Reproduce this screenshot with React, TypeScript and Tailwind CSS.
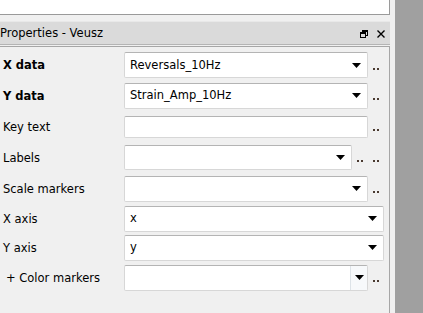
import React from "react";

const font = { fontFamily: '"DejaVu Sans", Verdana, sans-serif' };

function Arrow() {
  return (
    <svg width="9" height="5" viewBox="0 0 9 5" className="block">
      <path d="M0 0 H9 L4.5 5 Z" fill="#000" />
    </svg>
  );
}

function Dots() {
  return (
    <div className="w-[16px] h-full flex items-center">
      <div className="flex gap-[2px] ml-[5px] mt-[7px]">
        <div className="w-[2px] h-[2px] bg-[#4a3a30]" />
        <div className="w-[2px] h-[2px] bg-[#4a3a30]" />
      </div>
    </div>
  );
}

type Row = {
  label: string;
  bold?: boolean;
  h: number;
  kind: "combo" | "edit" | "combobtn";
  value?: string;
  width: number;
  fh: number;
  dots: number;
};

const rows: Row[] = [
  { label: "X data", bold: true, h: 30, kind: "combo", value: "Reversals_10Hz", width: 244, fh: 26, dots: 1 },
  { label: "Y data", bold: true, h: 31, kind: "combo", value: "Strain_Amp_10Hz", width: 244, fh: 26, dots: 1 },
  { label: "Key text", h: 31, kind: "edit", width: 244, fh: 22, dots: 1 },
  { label: "Labels", h: 31, kind: "combo", width: 228, fh: 25, dots: 2 },
  { label: "Scale markers", h: 31, kind: "combo", width: 244, fh: 26, dots: 1 },
  { label: "X axis", h: 29, kind: "combo", value: "x", width: 260, fh: 26, dots: 0 },
  { label: "Y axis", h: 29, kind: "combo", value: "y", width: 260, fh: 26, dots: 0 },
  { label: "+ Color markers", h: 31, kind: "combobtn", width: 244, fh: 26, dots: 1 },
];

export default function App() {
  return (
    <div className="flex w-[423px] h-[313px] bg-[#f0f0f0] overflow-hidden text-black" style={font}>
      <div className="w-[395px] flex flex-col">
        <div className="w-[390px] h-[15px] bg-white border-b border-r border-[#9a9a9a]" />
        <div className="h-[6px]" />
        <div className="w-[390px] h-[24px] bg-[#dadada] border-t border-[#e8e8e8] border-b border-b-[#b4b4b4] flex items-center justify-between">
          <span className="text-[11.5px] leading-none mt-[2px]">Properties - Veusz</span>
          <div className="flex items-center gap-[9px] mr-[5px] mt-[1px]">
            <svg width="8" height="8" viewBox="0 0 8 8" className="block">
              <rect x="2.5" y="0.5" width="5" height="5" fill="none" stroke="#000" />
              <rect x="2.5" y="0.5" width="5" height="1.5" fill="#000" />
              <rect x="0.5" y="2.5" width="5" height="5" fill="#dadada" stroke="#000" />
              <rect x="0.5" y="2.5" width="5" height="1.5" fill="#000" />
            </svg>
            <svg width="8" height="8" viewBox="0 0 8 8" className="block">
              <path d="M0.5 0.5 L7.5 7.5 M7.5 0.5 L0.5 7.5" stroke="#000" strokeWidth="1.4" />
            </svg>
          </div>
        </div>
        <div className="h-[1px]" />
        <div className="w-[390px] flex-1 border-t border-r border-[#a6a6a6] pt-[3px]">
          {rows.map((r) => (
            <div key={r.label} className="flex items-center" style={{ height: r.h }}>
              <div
                className={`w-[124px] pl-[3px] mt-[2px] text-[11.5px] leading-none ${r.bold ? "font-bold" : ""}`}
              >
                {r.label.startsWith("+") ? <span className="pl-[3px]">{r.label}</span> : r.label}
              </div>
              <div
                className="bg-white border border-[#d7d7d7] border-t-[#b4b4b4] rounded-[2px] flex items-center"
                style={{ width: r.width, height: r.fh }}
              >
                <span className="flex-1 pl-[5px] mt-[1px] text-[11.5px] leading-none">{r.value ?? ""}</span>
                {r.kind === "combo" && (
                  <div className="w-[15px] flex justify-start">
                    <Arrow />
                  </div>
                )}
                {r.kind === "combobtn" && (
                  <div className="w-[17px] h-full border-l border-[#dde3e8] bg-[#f7f9fb] flex items-center justify-center">
                    <Arrow />
                  </div>
                )}
              </div>
              {Array.from({ length: r.dots }).map((_, i) => (
                <Dots key={i} />
              ))}
            </div>
          ))}
        </div>
      </div>
      <div className="flex-1 bg-[#a0a0a0]" />
    </div>
  );
}
